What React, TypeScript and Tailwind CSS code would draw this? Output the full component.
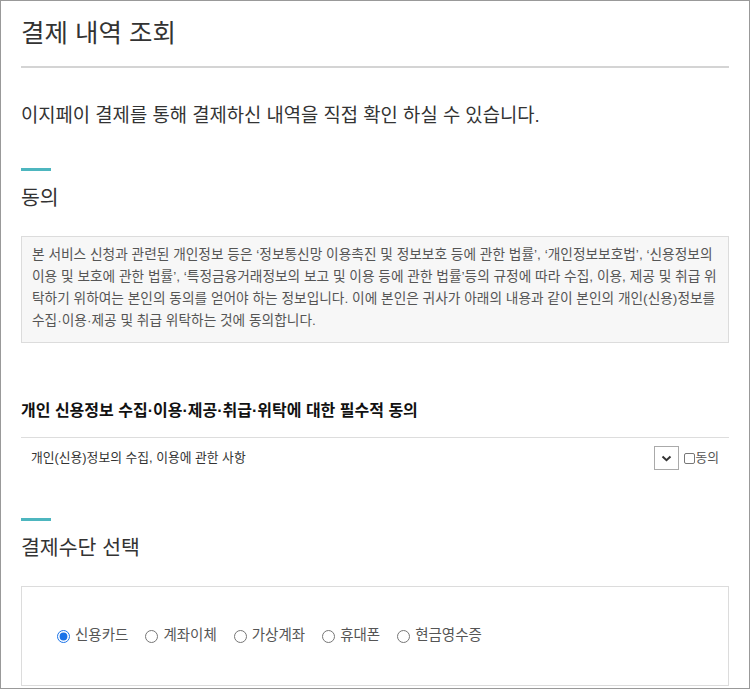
import React from 'react';

const payMethods = ['신용카드', '계좌이체', '가상계좌', '휴대폰', '현금영수증'];

const agreeLines = [
  '본 서비스 신청과 관련된 개인정보 등은 ‘정보통신망 이용촉진 및 정보보호 등에 관한 법률’, ‘개인정보보호법’, ‘신용정보의',
  '이용 및 보호에 관한 법률’, ‘특정금융거래정보의 보고 및 이용 등에 관한 법률’등의 규정에 따라 수집, 이용, 제공 및 취급 위',
  '탁하기 위하여는 본인의 동의를 얻어야 하는 정보입니다. 이에 본인은 귀사가 아래의 내용과 같이 본인의 개인(신용)정보를',
  '수집·이용·제공 및 취급 위탁하는 것에 동의합니다.',
];

function SectionTitle({ children, className = '' }: { children: React.ReactNode; className?: string }) {
  return (
    <div className={className}>
      <div className="w-[30px] h-[3px] bg-[#4db6bf]" />
      <h2 className="mt-[13px] text-[20.5px] leading-[28px] text-[#333]">{children}</h2>
    </div>
  );
}

export default function App() {
  return (
    <div className="w-[750px] h-[689px] overflow-hidden bg-white border border-[#999] font-['Liberation_Sans','Noto_Sans_CJK_KR',sans-serif]">
      <div className="px-[20px] pt-[14px]">
        {/* Header */}
        <h1 className="pb-[15px] border-b-2 border-[#d4d4d4] text-[25.5px] leading-[36px] text-[#333]">결제 내역 조회</h1>
        <p className="mt-[35px] text-[18.8px] leading-[26px] text-[#333]">
          이지페이 결제를 통해 결제하신 내역을 직접 확인 하실 수 있습니다.
        </p>

        {/* 동의 */}
        <SectionTitle className="mt-[39px]">동의</SectionTitle>
        <div className="mt-[24px] border border-[#dcdcdc] bg-[#f7f7f7] pl-[10px] pt-[7px] pb-[10px] text-[13.7px] leading-[22px] text-[#555]">
          {agreeLines.map((line, i) => (
            <div key={i} className="whitespace-nowrap">{line}</div>
          ))}
        </div>

        <h3 className="mt-[57px] pb-[15px] border-b border-[#dddddd] text-[16px] leading-[22px] font-bold text-[#111]">
          개인 신용정보 수집·이용·제공·취급·위탁에 대한 필수적 동의
        </h3>
        <div className="mt-[8px] h-[24px] flex items-center justify-between pl-[10px] pr-[10px]">
          <span className="text-[12.8px] text-[#333]">개인(신용)정보의 수집, 이용에 관한 사항</span>
          <div className="flex items-center">
            <div className="w-[25px] h-[24px] border border-[#aaa] flex items-center justify-center bg-white">
              <svg width="11" height="7" viewBox="0 0 11 7" fill="none">
                <path d="M1.5 1.5 L5.5 5.2 L9.5 1.5" stroke="#333" strokeWidth="2" />
              </svg>
            </div>
            <label className="ml-[5px] flex items-center text-[12.8px] text-[#555]">
              <span className="w-[11px] h-[11px] border border-[#777] rounded-[2px] bg-white" />
              동의
            </label>
          </div>
        </div>

        {/* 결제수단 */}
        <SectionTitle className="mt-[48px]">결제수단 선택</SectionTitle>
        <div className="mt-[24px] h-[100px] border border-[#dcdcdc] flex items-center pl-[35px] gap-[17px]">
          {payMethods.map((m, i) => (
            <label key={m} className="flex items-center gap-[5px] text-[14.5px] text-[#555]">
              <input type="radio" name="pay" defaultChecked={i === 0} className="w-[13px] h-[13px] m-0 accent-[#1a73e8]" />
              {m}
            </label>
          ))}
        </div>
      </div>
    </div>
  );
}
